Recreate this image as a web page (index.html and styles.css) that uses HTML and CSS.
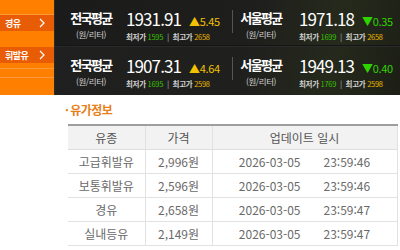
FILE: index.html
```html
<!DOCTYPE html>
<html lang="ko">
<head>
<meta charset="utf-8">
<link rel="stylesheet" href="styles.css">
</head>
<body>
<div class="top">
  <div class="side">
    <div class="s-pad s-a"></div>
    <div class="s-item"><span>경유</span><svg class="chev" viewBox="0 0 6 10" width="6" height="10"><path d="M1 1 L5 5 L1 9" fill="none" stroke="#fff" stroke-width="1.2"/></svg></div>
    <div class="s-pad s-b"></div>
    <div class="s-item"><span>휘발유</span><svg class="chev" viewBox="0 0 6 10" width="6" height="10"><path d="M1 1 L5 5 L1 9" fill="none" stroke="#fff" stroke-width="1.2"/></svg></div>
    <div class="s-pad s-c"></div>
    <div class="s-pad s-d"></div>
    <div class="s-pad s-e"></div>
  </div>
  <div class="panel">
    <div class="prow">
      <div class="cell c1">
        <div class="ttl"><div class="t">전국평균</div><div class="u">(원/리터)</div></div>
        <div class="stat">
          <div class="num"><span class="big">1931.91</span><span class="chg up">▲5.45</span></div>
          <div class="sub">최저가 <b class="g">1595</b> <i>|</i> 최고가 <b class="y">2658</b></div>
        </div>
      </div>
      <div class="div"></div>
      <div class="cell c2">
        <div class="ttl"><div class="t">서울평균</div><div class="u">(원/리터)</div></div>
        <div class="stat">
          <div class="num"><span class="big">1971.18</span><span class="chg dn">▼0.35</span></div>
          <div class="sub">최저가 <b class="g">1699</b> <i>|</i> 최고가 <b class="y">2658</b></div>
        </div>
      </div>
    </div>
    <div class="prow r2">
      <div class="cell c1">
        <div class="ttl"><div class="t">전국평균</div><div class="u">(원/리터)</div></div>
        <div class="stat">
          <div class="num"><span class="big">1907.31</span><span class="chg up">▲4.64</span></div>
          <div class="sub">최저가 <b class="g">1695</b> <i>|</i> 최고가 <b class="y">2598</b></div>
        </div>
      </div>
      <div class="div"></div>
      <div class="cell c2">
        <div class="ttl"><div class="t">서울평균</div><div class="u">(원/리터)</div></div>
        <div class="stat">
          <div class="num"><span class="big">1949.13</span><span class="chg dn">▼0.40</span></div>
          <div class="sub">최저가 <b class="g">1769</b> <i>|</i> 최고가 <b class="y">2598</b></div>
        </div>
      </div>
    </div>
  </div>
</div>
<div class="info">
  <h2 class="head"><span class="dot">·</span>유가정보</h2>
  <table class="tbl">
    <thead>
      <tr><th class="k1">유종</th><th class="k2">가격</th><th class="k3">업데이트 일시</th></tr>
    </thead>
    <tbody>
      <tr><td>고급휘발유</td><td>2,996원</td><td><span>2026-03-05</span><span class="tm">23:59:46</span></td></tr>
      <tr><td>보통휘발유</td><td>2,596원</td><td><span>2026-03-05</span><span class="tm">23:59:46</span></td></tr>
      <tr><td>경유</td><td>2,658원</td><td><span>2026-03-05</span><span class="tm">23:59:47</span></td></tr>
      <tr><td>실내등유</td><td>2,149원</td><td><span>2026-03-05</span><span class="tm">23:59:47</span></td></tr>
    </tbody>
  </table>
</div>
</body>
</html>
```
FILE: styles.css
```css
* { box-sizing: border-box; }
html, body { margin: 0; padding: 0; background: #fff; }
body {
  width: 400px;
  height: 250px;
  overflow: hidden;
  font-family: "Noto Sans CJK KR", "Noto Sans", sans-serif;
}
.top {
  display: flex;
  height: 95px;
}
.side {
  width: 55px;
  background: #ff7f00;
  border-right: 1px solid #2a2a2a;
  display: flex;
  flex-direction: column;
}
.s-pad { background: #ff7f00; }
.s-a { height: 15px; border-bottom: 1px solid #ff9a3a; }
.s-b { height: 16px; }
.s-c { height: 6px; border-bottom: 1px solid #ff9a3a; }
.s-d { height: 9px; border-bottom: 1px solid #ff9a3a; }
.s-e { flex: 1; }
.s-item {
  height: 16px;
  background: #e95c06;
  display: flex;
  align-items: center;
  justify-content: space-between;
  padding: 0 9px 0 5px;
  color: #fff;
  font-size: 9px;
  font-weight: 700;
  letter-spacing: -0.5px;
}
.chev { display: block; }
.panel {
  flex: 1;
  background: linear-gradient(100deg, #1b1b1b 0%, #1e1e1c 55%, #262a1c 80%, #1e2016 100%);
  display: flex;
  flex-direction: column;
}
.prow {
  height: 46px;
  display: flex;
  align-items: flex-start;
  border-bottom: 1px solid #151515;
}
.prow.r2 {
  flex: 1;
  border-bottom: none;
  border-top: 1px solid #2a2a2a;
  background: linear-gradient(100deg, rgba(255,255,255,0.02), rgba(0,0,0,0.05));
}
.cell {
  display: flex;
  align-items: flex-start;
  padding-top: 10px;
}
.c1 { width: 177px; padding-left: 14px; }
.c2 { flex: 1; padding-left: 8px; }
.div {
  width: 1px;
  height: 23px;
  margin-top: 10px;
  background: #555;
}
.ttl {
  width: 44px;
  display: flex;
  flex-direction: column;
  align-items: center;
  color: #fff;
}
.c2 .ttl { width: 40px; }
.t {
  font-size: 13px;
  font-weight: 700;
  line-height: 16px;
  letter-spacing: -1.6px;
  white-space: nowrap;
}
.u {
  font-size: 8.5px;
  line-height: 10px;
  margin-top: 3px;
  color: #d4d4d4;
  letter-spacing: -0.4px;
  white-space: nowrap;
}
.stat { margin-left: 13px; }
.c2 .stat { margin-left: 18px; }
.num {
  display: flex;
  align-items: baseline;
  height: 18px;
}
.big {
  font-size: 17px;
  line-height: 18px;
  color: #fff;
  letter-spacing: -0.9px;
  width: 63px;
}
.chg {
  font-size: 11px;
  letter-spacing: -0.3px;
}
.up { color: #f2c200; }
.dn { color: #2fd400; }
.sub {
  margin-top: 4px;
  font-size: 7.5px;
  line-height: 9px;
  font-weight: 700;
  color: #d0d0d0;
  white-space: nowrap;
  letter-spacing: -0.3px;
}
.sub b { font-weight: 400; }
.sub i { font-style: normal; color: #888; margin: 0 2px; }
.g { color: #38c000; }
.y { color: #e8b400; }

.info { padding-left: 65px; }
.head {
  margin: 0;
  padding-top: 8px;
  height: 29px;
  font-size: 12px;
  line-height: 14px;
  font-weight: 700;
  color: #e8801a;
  letter-spacing: -0.6px;
}
.dot { margin-right: 2px; }
.tbl {
  margin-left: 3px;
  border-collapse: collapse;
  border-top: 2px solid #9e9e9e;
  border-right: 1px solid #dcdcdc;
  border-bottom: 1px solid #c8c8c8;
  font-size: 12px;
  color: #6a6a6a;
}
.tbl th, .tbl td {
  text-align: center;
  padding: 0;
  height: 24px;
  border-bottom: 1px solid #e2e2e2;
  border-right: 1px solid #e2e2e2;
  white-space: nowrap;
}
.tbl th {
  height: 24px;
  background: #f2f2f2;
  font-weight: 400;
  color: #555;
  border-bottom: 1px solid #dedede;
}
.k1 { width: 77px; }
.k2 { width: 67px; }
.k3 { width: 185px; }
.tm { margin-left: 23px; }
```
